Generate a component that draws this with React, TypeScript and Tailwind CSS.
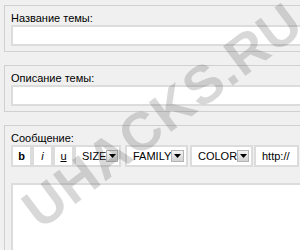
const Arrow = () => (
  <span className="ml-auto inline-flex h-[12px] w-[14px] items-center justify-center border border-[#b4b4b4] bg-gradient-to-b from-[#f4f4f4] to-[#d2d2d2]">
    <svg width="7" height="4" viewBox="0 0 7 4">
      <path d="M0 0h7L3.5 4z" fill="#000" />
    </svg>
  </span>
)

const Btn = ({ className, children }: { className: string; children: React.ReactNode }) => (
  <div className={`flex h-[22px] shrink-0 items-center border-2 border-[#dcdcdc] bg-white text-[11px] text-black ${className}`}>
    {children}
  </div>
)

const Field = ({ label }: { label: string }) => (
  <div className="w-[330px] border border-[#d0d0d0] px-[6px] pt-[6px] pb-[5px]">
    <div className="h-[13px] text-[11px] leading-[13px] text-black">{label}</div>
    <div className="h-[21px] border-2 border-[#dcdcdc] bg-white" />
  </div>
)

export default function App() {
  return (
    <div
      className="relative h-[250px] w-[300px] overflow-hidden bg-[#f0f0f0] pt-[5px] pl-[4px]"
      style={{ fontFamily: '"Liberation Sans", Arial, sans-serif' }}
    >
      <Field label="Название темы:" />
      <div className="h-[13px]" />
      <Field label="Описание темы:" />
      <div className="h-[13px]" />

      <div className="h-[200px] w-[330px] border border-[#d0d0d0] px-[6px] pt-[6px]">
        <div className="h-[13px] text-[11px] leading-[13px] text-black">Сообщение:</div>
        <div className="flex">
          <Btn className="w-[21px] justify-center font-bold">b</Btn>
          <Btn className="w-[21px] justify-center italic">i</Btn>
          <Btn className="w-[21px] justify-center underline">u</Btn>
          <Btn className="w-[47px] pl-[6px] pr-[1px] text-[10px]">SIZE<Arrow /></Btn>
          <Btn className="ml-[4px] w-[63px] pl-[6px] pr-[2px] text-[10px]">FAMILY<Arrow /></Btn>
          <Btn className="ml-[2px] w-[63px] pl-[6px] pr-[2px] text-[10px]">COLOR<Arrow /></Btn>
          <Btn className="ml-[1px] w-[45px] pl-[6px]">http://</Btn>
        </div>
        <div className="mt-[16px] h-[120px] border-2 border-[#dcdcdc] bg-white" />
      </div>

      {/* watermark */}
      <div className="pointer-events-none absolute left-[-18px] top-[88px] w-[360px] -rotate-[37deg] text-center text-[54px] font-bold leading-none tracking-[1px] text-[rgba(60,60,60,0.2)]">
        UHACKS.RU
      </div>
    </div>
  )
}
